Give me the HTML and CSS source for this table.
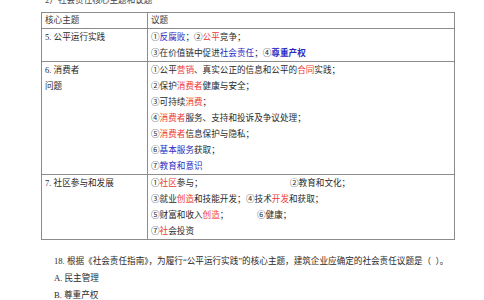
FILE: index.html
```html
<!DOCTYPE html>
<html lang="zh">
<head>
<meta charset="utf-8">
<link rel="stylesheet" href="styles.css">
</head>
<body>
<div class="page">
  <div class="caption">2）社会责任核心主题和议题</div>
  <table class="topics">
    <tr class="head">
      <td class="c1">核心主题</td>
      <td class="c2">议题</td>
    </tr>
    <tr>
      <td class="c1">5. 公平运行实践</td>
      <td class="c2">
        <div>①<span class="b">反腐败</span>；②<span class="r">公平</span>竞争；</div>
        <div>③在价值链中促进<span class="b">社会责任</span>；④<span class="b bold">尊重产权</span></div>
      </td>
    </tr>
    <tr>
      <td class="c1"><div>6. 消费者</div><div>问题</div></td>
      <td class="c2">
        <div>①公平<span class="r">营销</span>、真实公正的信息和公平的<span class="r">合同</span>实践；</div>
        <div>②保护<span class="r">消费者</span>健康与安全；</div>
        <div>③可持续<span class="r">消费</span>；</div>
        <div>④<span class="r">消费者</span>服务、支持和投诉及争议处理；</div>
        <div>⑤<span class="r">消费者</span>信息保护与隐私；</div>
        <div>⑥<span class="b">基本服务</span>获取；</div>
        <div>⑦<span class="b">教育和意识</span></div>
      </td>
    </tr>
    <tr>
      <td class="c1">7. 社区参与和发展</td>
      <td class="c2">
        <div class="pair"><span class="col w1">①<span class="r">社区</span>参与；</span><span>②教育和文化；</span></div>
        <div class="pair"><span class="col w2">③就业<span class="r">创造</span>和技能开发；</span><span>④技术<span class="r">开发</span>和获取；</span></div>
        <div class="pair"><span class="col w3">⑤财富和收入<span class="r">创造</span>；</span><span>⑥健康；</span></div>
        <div>⑦<span class="r">社</span>会投资</div>
      </td>
    </tr>
  </table>
  <div class="question">
    <p>18. 根据《社会责任指南》，为履行“公平运行实践”的核心主题，建筑企业应确定的社会责任议题是（&nbsp;&nbsp;）。</p>
    <p>A. 民主管理</p>
    <p>B. 尊重产权</p>
  </div>
</div>
</body>
</html>
```

FILE: styles.css
```css
html, body {
  margin: 0;
  padding: 0;
  background: #ffffff;
}

body {
  font-family: "Liberation Serif", "Noto Sans CJK SC", serif;
  font-size: 8.6px;
  color: #2a2a2a;
  overflow: hidden;
}

.page {
  width: 484px;
  height: 300px;
  overflow: hidden;
}

.caption {
  margin: -6px 0 0 45px;
  height: 12px;
  line-height: 12px;
  color: #444;
}

.topics {
  margin: 6px 0 0 41px;
  width: 414px;
  border-collapse: collapse;
  table-layout: fixed;
}

.topics td {
  border: 1px solid #8c8c8c;
  vertical-align: top;
  padding: 0 0 0 3px;
  line-height: 16px;
}

.topics .c1 {
  width: 102px;
}

.topics .head td {
  line-height: 15px;
  color: #3a3a3a;
}

.r {
  color: #ee3b3b;
}

.b {
  color: #2b2bc4;
}

.bold {
  font-weight: 600;
}

.pair {
  white-space: nowrap;
}

.col {
  display: inline-block;
  white-space: nowrap;
}

.w1 { width: 139px; }
.w2 { width: 95px; }
.w3 { width: 106px; }

.question {
  margin: 13px 0 0 54px;
}

.question p {
  margin: 0;
  line-height: 17px;
}
```
